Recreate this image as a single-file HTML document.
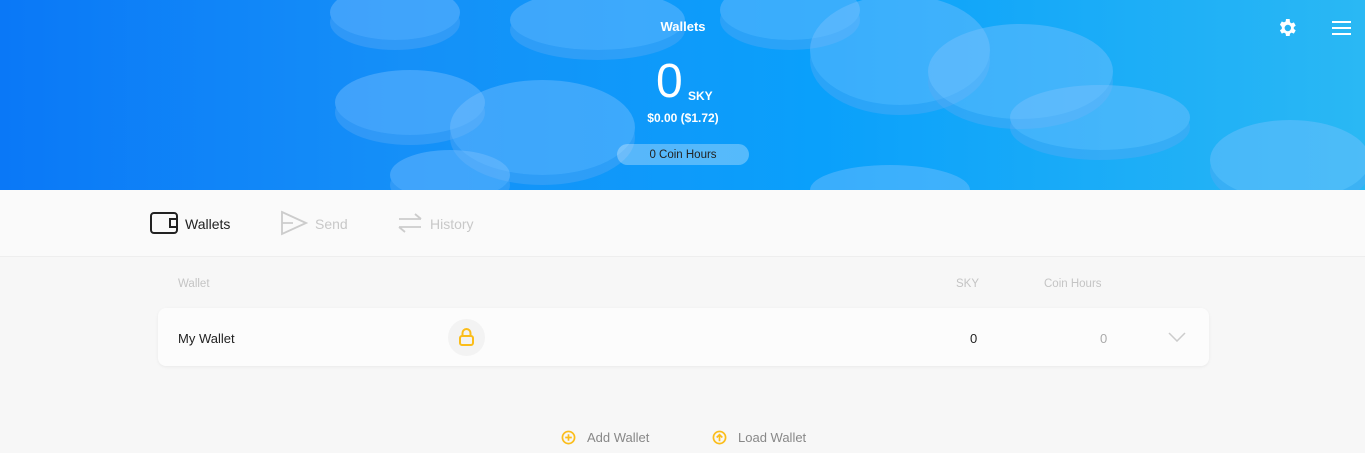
<!DOCTYPE html>
<html><head><meta charset="utf-8"><style>
*{margin:0;padding:0;box-sizing:border-box}
body{width:1365px;height:453px;overflow:hidden;background:#f7f7f7;font-family:"Liberation Sans",sans-serif;position:relative}
.hdr{position:absolute;left:0;top:0;width:1365px;height:190px;background:linear-gradient(90deg,#0a78f7 0%,#1590f8 30%,#0aa0fb 60%,#2ab8f4 100%);overflow:hidden}
.coin{position:absolute;border-radius:50%;background:rgba(130,195,255,0.4);box-shadow:0 10px 0 rgba(90,170,245,0.4)}
.t{position:absolute;color:#fff;text-align:center;width:200px;left:583px}
.nav{position:absolute;top:190px;left:0;width:1365px;height:67px;background:#fafafa;border-bottom:1px solid #eee}
.nav span{position:absolute;top:26px;font-size:14px}
.th{position:absolute;top:278px;font-size:11.5px;color:#c4c4c4}
.row{position:absolute;left:158px;top:308px;width:1051px;height:58px;background:#fcfcfc;border-radius:8px;box-shadow:0 1px 3px rgba(0,0,0,0.06)}
.row span{position:absolute;top:23px;font-size:13px}
.ft{position:absolute;top:430px;font-size:13px;color:#888}
</style></head><body>
<div class="hdr">
<div class="coin" style="left:335px;top:70px;width:150px;height:65px"></div>
<div class="coin" style="left:450px;top:80px;width:185px;height:95px"></div>
<div class="coin" style="left:510px;top:-10px;width:175px;height:60px"></div>
<div class="coin" style="left:330px;top:-15px;width:130px;height:55px"></div>
<div class="coin" style="left:720px;top:-20px;width:140px;height:60px"></div>
<div class="coin" style="left:810px;top:-5px;width:180px;height:110px"></div>
<div class="coin" style="left:928px;top:24px;width:185px;height:95px"></div>
<div class="coin" style="left:1010px;top:85px;width:180px;height:65px"></div>
<div class="coin" style="left:1210px;top:120px;width:160px;height:80px"></div>
<div class="coin" style="left:810px;top:165px;width:160px;height:50px"></div>
<div class="coin" style="left:390px;top:150px;width:120px;height:50px"></div>
<div class="t" style="top:19px;font-size:13px;font-weight:bold">Wallets</div>
<div style="position:absolute;left:656px;top:56px;color:#fff;font-size:48px;line-height:52px">0</div>
<div style="position:absolute;left:688px;top:89px;color:#fff;font-size:12px;font-weight:bold">SKY</div>
<div class="t" style="top:111px;font-size:12px;font-weight:bold">$0.00 ($1.72)</div>
<div style="position:absolute;left:617px;top:144px;width:132px;height:21px;border-radius:11px;background:rgba(255,255,255,0.3);font-size:11.5px;color:#222;text-align:center;line-height:22px">0 Coin Hours</div>
<svg style="position:absolute;left:1276px;top:17px" width="22" height="22" viewBox="0 0 24 24"><path fill="#fff" d="M19.4 13c.04-.32.06-.66.06-1s-.02-.68-.06-1l2.1-1.650-2-3.46-2.49 1a7.3 7.3 0 0 0-1.73-1L14.900 2.2h-4l-.38 2.65c-.63.26-1.2.6-1.73 1l-2.49-1-2 3.46L6.4 11c-.04.32-.07.66-.07 1s.03.68.07 1l-2.1 1.65 2 3.46 2.49-1c.52.4 1.1.74 1.73 1l.38 2.65h4l.38-2.65c.63-.26 1.2-.6 1.73-1l2.49 1 2-3.46zM12.9 15.5a3.5 3.5 0 1 1 0-7 3.5 3.5 0 0 1 0 7z"/></svg>
<div style="position:absolute;left:1332px;top:21px;width:19px;height:2px;background:#fff;box-shadow:0 6px 0 #fff,0 12px 0 #fff"></div>
</div>
<div class="nav">
<svg style="position:absolute;left:150px;top:21px" width="30" height="24" viewBox="0 0 30 24"><rect x="1" y="2" width="26" height="20" rx="3" fill="none" stroke="#222" stroke-width="2"/><path d="M27 8h-7v8h7" fill="none" stroke="#222" stroke-width="2"/></svg>
<span style="left:185px;color:#222">Wallets</span>
<svg style="position:absolute;left:280px;top:20px" width="28" height="26" viewBox="0 0 28 26"><path d="M2 2L26 13 2 24Z M2 13h11" fill="none" stroke="#ccc" stroke-width="1.8"/></svg>
<span style="left:315px;color:#c8c8c8">Send</span>
<svg style="position:absolute;left:397px;top:22px" width="26" height="22" viewBox="0 0 26 22"><path d="M2 7h22M18 2l6 5M24 15H2M8 20l-6-5" fill="none" stroke="#ccc" stroke-width="1.8"/></svg>
<span style="left:430px;color:#c8c8c8">History</span>
</div>
<div class="th" style="left:178px">Wallet</div>
<div class="th" style="left:956px">SKY</div>
<div class="th" style="left:1044px">Coin Hours</div>
<div class="row">
<span style="left:20px;color:#222">My Wallet</span>
<div style="position:absolute;left:290px;top:11px;width:37px;height:37px;border-radius:50%;background:#f3f3f3"></div>
<svg style="position:absolute;left:300px;top:19px" width="17" height="20" viewBox="0 0 17 20"><path d="M4.5 9V6a4 4 0 0 1 8 0v3" fill="none" stroke="#fbbd1a" stroke-width="2"/><rect x="2" y="9" width="13" height="9" rx="2" fill="none" stroke="#fbbd1a" stroke-width="2"/></svg>
<span style="left:812px;color:#222">0</span>
<span style="left:942px;color:#aaa">0</span>
<svg style="position:absolute;left:1010px;top:24px" width="18" height="10" viewBox="0 0 18 10"><path d="M1 1l8 8 8-8" fill="none" stroke="#ccc" stroke-width="1.5"/></svg>
</div>
<svg style="position:absolute;left:561px;top:430px" width="15" height="15" viewBox="0 0 16 16"><circle cx="8" cy="8" r="6.5" fill="none" stroke="#fbbd1a" stroke-width="1.8"/><path d="M8 4.5v7M4.5 8h7" stroke="#fbbd1a" stroke-width="1.8"/></svg>
<div class="ft" style="left:587px">Add Wallet</div>
<svg style="position:absolute;left:712px;top:430px" width="15" height="15" viewBox="0 0 16 16"><circle cx="8" cy="8" r="6.5" fill="none" stroke="#fbbd1a" stroke-width="1.8"/><path d="M8 12V5M5 8l3-3 3 3" fill="none" stroke="#fbbd1a" stroke-width="1.8"/></svg>
<div class="ft" style="left:738px">Load Wallet</div>
</body></html>
